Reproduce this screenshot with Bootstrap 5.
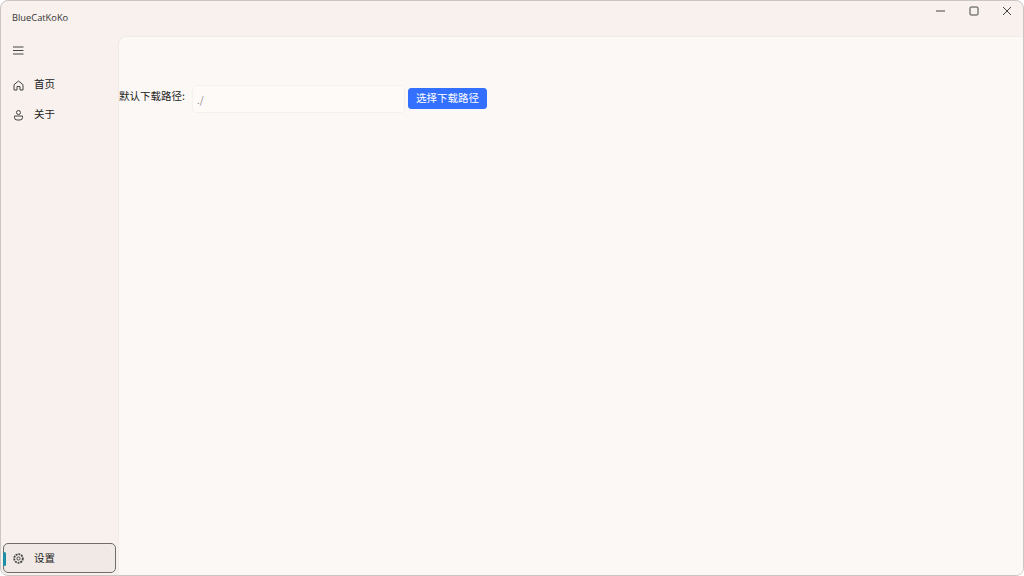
<!DOCTYPE html>
<html lang="zh-CN">
<head>
<meta charset="utf-8">
<title>BlueCatKoKo</title>
<link href="https://cdn.jsdelivr.net/npm/bootstrap@5.3.0/dist/css/bootstrap.min.css" rel="stylesheet">
<style>
html,body{height:100%;margin:0;background:#fff;overflow:hidden}
body{font-family:"Noto Sans CJK SC","Noto Sans",sans-serif;color:#222}
.win{width:1024px;height:576px;background:#f8f1ed;border:1px solid #c9c6c4;border-radius:8px;overflow:hidden}
.title-row{height:35px;padding-left:11px;padding-bottom:2px}
.app-name{font-size:9.300px;font-family:"Open Sans","Noto Sans",sans-serif;color:#333}
.win-btn{width:33px;height:22px;background:none;border:0;padding:0;color:#333;margin-top:-14px}
.side{width:117px;padding:0 2px 2px 2px}
.nav-item-x{height:30px;padding-left:9px;gap:10px;font-size:10.500px;line-height:14px;color:#222;border:1px solid transparent;border-radius:5px;position:relative}
.nav-item-x span.txt{position:relative;top:-1px}
.menu-ico{height:28px;margin-bottom:6px}
.sel{height:30px;background:#f0e9e5;border-color:#6f6c6a}
.sel-bar{position:absolute;left:-1px;top:8px;width:3px;height:14px;background:#1f8fa8;border-radius:2px}
.panel{background:#fcf8f5;border:1px solid #f0ebe8;border-right:0;border-bottom:0;border-top-left-radius:8px;padding-top:48px}
.lbl{font-size:10.500px;line-height:14px;margin-right:7px;margin-top:4px}
.path-in{width:213px;height:28px;background:#fdfaf8;border:1px solid #f5f1ee;border-radius:4px;font-size:10px;color:#888;padding:6px 4px 0}
.pick{background:#3370ff;border:1px solid #3370ff;color:#fff;font-size:10.500px;border-radius:3px;width:79px;height:21px;padding:0;margin-left:3px;margin-top:3px;line-height:1}
svg{display:block}
</style>
</head>
<body>
<div class="win d-flex flex-column">
  <div class="title-row d-flex justify-content-between align-items-center flex-shrink-0">
    <span class="app-name">BlueCatKoKo</span>
    <div class="d-flex">
      <button class="win-btn d-flex align-items-center justify-content-center" aria-label="min"><svg width="10" height="10" viewBox="0 0 10 10"><path d="M0 5h9" stroke="#444" stroke-width="1"/></svg></button>
      <button class="win-btn d-flex align-items-center justify-content-center" aria-label="max"><svg width="10" height="10" viewBox="0 0 10 10"><rect x="1" y="1" width="8" height="8" rx="1" fill="none" stroke="#444"/></svg></button>
      <button class="win-btn d-flex align-items-center justify-content-center" aria-label="close"><svg width="10" height="10" viewBox="0 0 10 10"><path d="M1 1l8 8M9 1l-8 8" stroke="#444"/></svg></button>
    </div>
  </div>
  <div class="d-flex flex-grow-1">
    <div class="side d-flex flex-column">
      <div class="nav-item-x menu-ico d-flex align-items-center"><svg width="11" height="9" viewBox="0 0 11 9"><path d="M0 1h10.500M0 4.500h10.500M0 8h10.500" stroke="#444"/></svg></div>
      <div class="nav-item-x d-flex align-items-center"><svg width="11" height="11" viewBox="0 0 11 11"><path d="M1 4.700 5.500 1 10 4.700V10H7V6.500H4V10H1Z" fill="none" stroke="#444"/></svg><span class="txt">首页</span></div>
      <div class="nav-item-x d-flex align-items-center"><svg width="11" height="11" viewBox="0 0 11 11"><circle cx="5.500" cy="2.500" r="2" fill="none" stroke="#444"/><path d="M1.500 6h8v1.500a2.500 2.500 0 0 1-2.500 2.500H4a2.500 2.500 0 0 1-2.500-2.500Z" fill="none" stroke="#444"/></svg><span class="txt">关于</span></div>
      <div class="flex-grow-1"></div>
      <div class="nav-item-x sel d-flex align-items-center"><span class="sel-bar"></span><svg width="11" height="11" viewBox="0 0 11 11"><circle cx="5.500" cy="5.500" r="1.600" fill="none" stroke="#444"/><circle cx="5.500" cy="5.500" r="4.300" fill="none" stroke="#444" stroke-width="1.800" stroke-dasharray="1.900 .9"/></svg><span>设置</span></div>
    </div>
    <div class="panel flex-grow-1 d-flex align-items-start">
      <span class="lbl">默认下载路径:</span>
      <div class="path-in">./</div>
      <button class="btn pick">选择下载路径</button>
    </div>
  </div>
</div>
</body>
</html>
